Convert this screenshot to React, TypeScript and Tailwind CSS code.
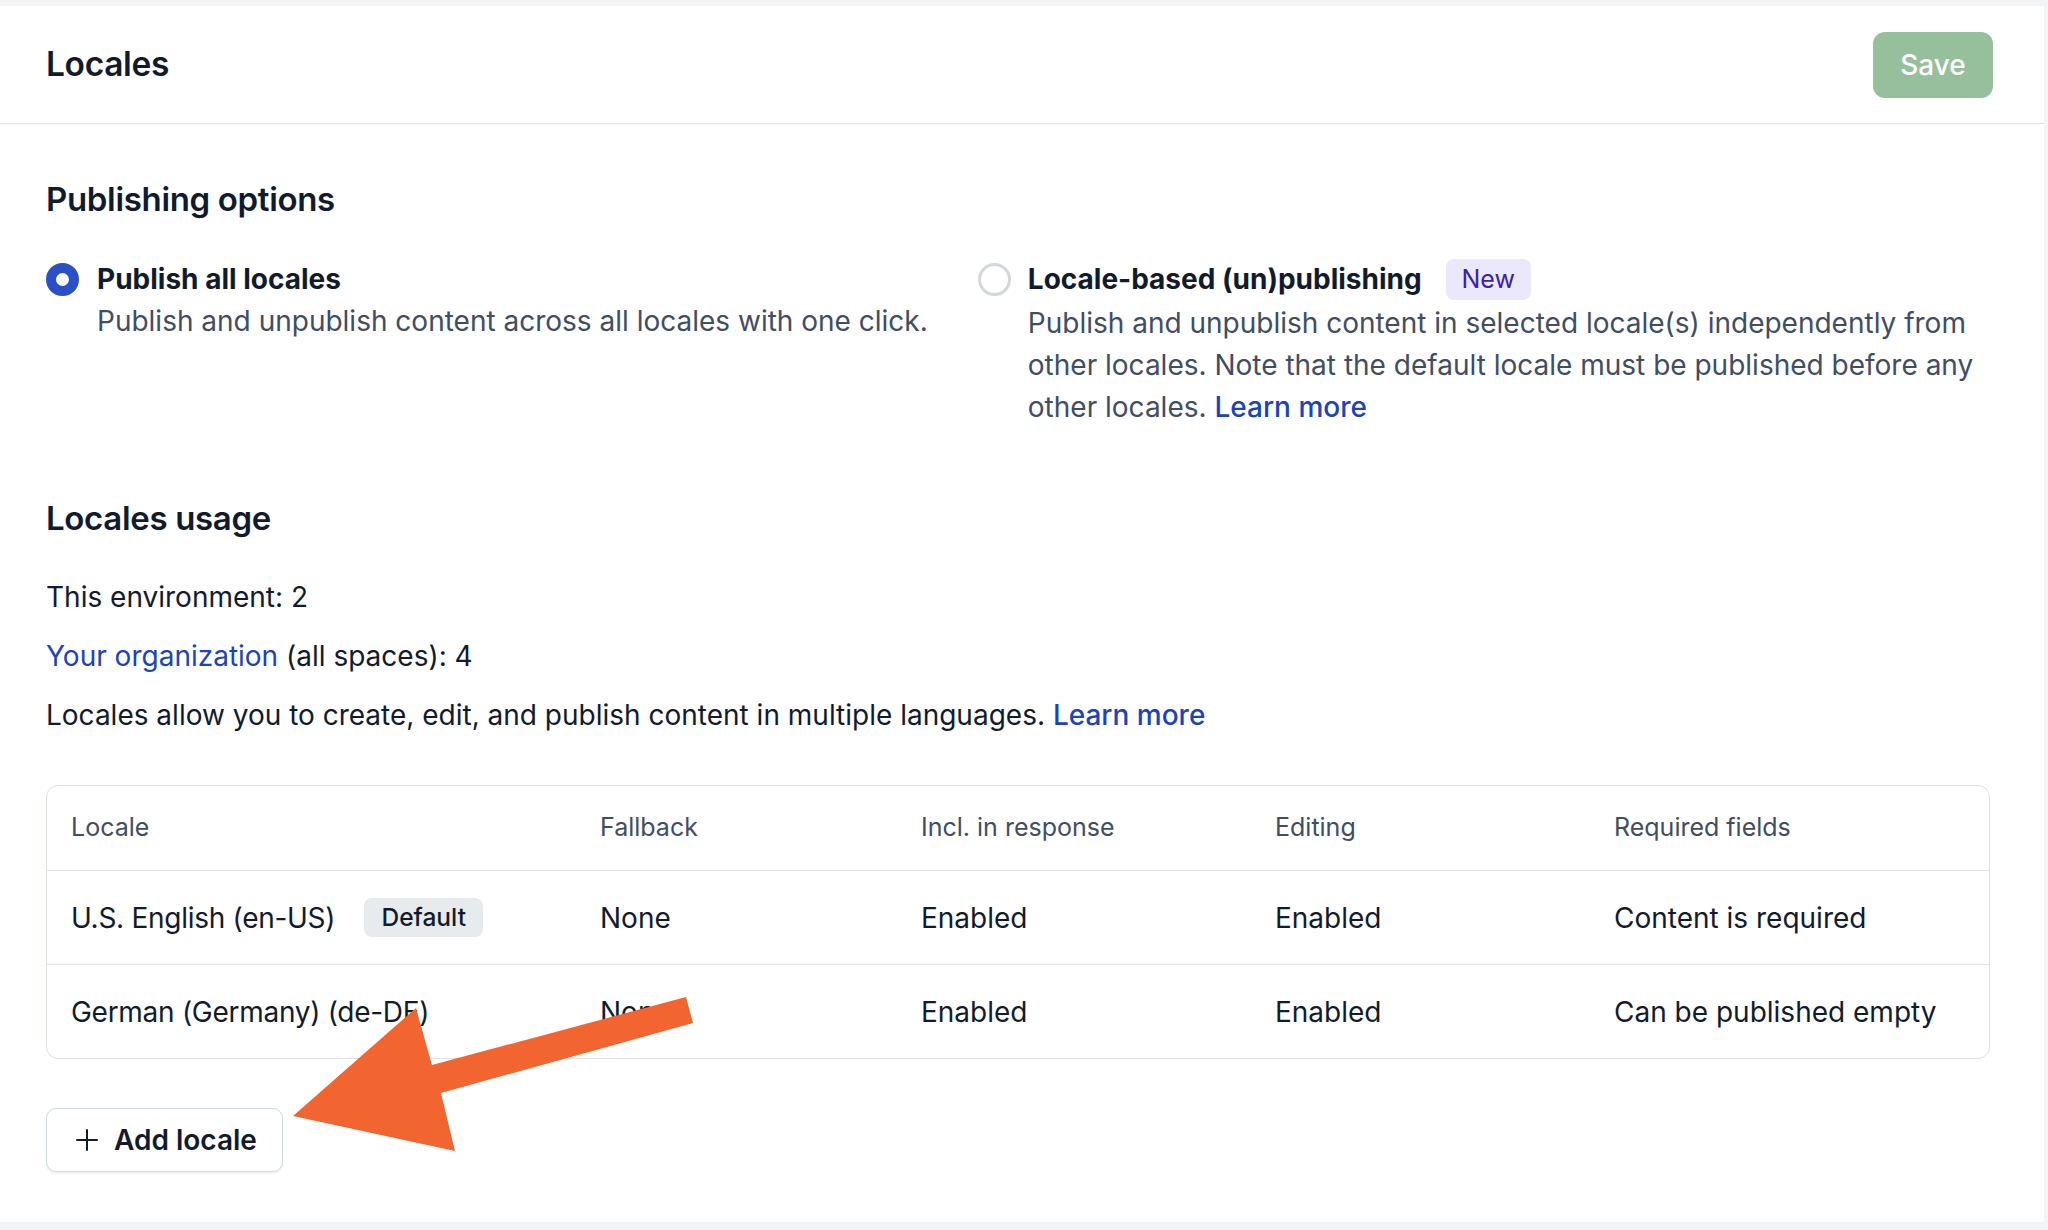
import React from "react";

const columns = ["Locale", "Fallback", "Incl. in response", "Editing", "Required fields"];

const rows = [
  { name: "U.S. English (en-US)", isDefault: true, fallback: "None", response: "Enabled", editing: "Enabled", required: "Content is required" },
  { name: "German (Germany) (de-DE)", isDefault: false, fallback: "None", response: "Enabled", editing: "Enabled", required: "Can be published empty" },
];

function Radio({ checked }: { checked: boolean }) {
  return checked ? (
    <span className="w-[33px] h-[33px] shrink-0 rounded-full border-[10px] border-[#2a51c4] bg-white" />
  ) : (
    <span className="w-[33px] h-[33px] shrink-0 rounded-full border-[3px] border-[#d3d8dc] bg-white" />
  );
}

export default function App() {
  return (
    <div
      className="relative min-h-screen bg-[#f3f4f5] pt-[6px] text-[#111b2b]"
      style={{ fontFamily: "Inter, 'Noto Sans', sans-serif" }}
    >
      <div className="mr-[4px] h-[1216px] bg-white">
        {/* header */}
        <div className="flex h-[118px] items-center justify-between border-b border-[#dde2e6] pl-[46px] pr-[51px]">
          <h1 className="text-[33.5px] font-semibold leading-none tracking-[-0.01em]">Locales</h1>
          <button className="flex h-[66px] w-[120px] items-center justify-center rounded-[12px] bg-[#96bf9b] text-[28px] font-medium text-white">
            Save
          </button>
        </div>

        <div className="pl-[46px] pr-[54px]">
          {/* publishing options */}
          <h2 className="mt-[54px] text-[33px] font-semibold leading-[42px] tracking-[-0.01em]">Publishing options</h2>
          <div className="mt-[38px] flex gap-[50px]">
            <div className="flex shrink-0 gap-[18px]">
              <div className="flex h-[42px] items-center">
                <Radio checked />
              </div>
              <div className="text-[28px] leading-[42px]">
                <div className="font-bold">Publish all locales</div>
                <div className="text-[#414d63]">Publish and unpublish content across all locales with one click.</div>
              </div>
            </div>
            <div className="flex min-w-0 flex-1 gap-[17px]">
              <div className="flex h-[42px] items-center">
                <Radio checked={false} />
              </div>
              <div className="flex min-w-0 flex-1 flex-col gap-[2px] text-[28px] leading-[42px]">
                <div className="flex h-[42px] items-center gap-[24px]">
                  <span className="font-bold">Locale-based (un)publishing</span>
                  <span className="flex h-[41px] w-[85px] items-center justify-center rounded-[8px] bg-[#ece8fc] text-[25px] text-[#3b22a8]">
                    New
                  </span>
                </div>
                <p className="text-[#414d63]">
                  Publish and unpublish content in selected locale(s) independently from other locales. Note that the
                  default locale must be published before any other locales.{" "}
                  <a className="font-medium text-[#1c44b5]">Learn more</a>
                </p>
              </div>
            </div>
          </div>

          {/* usage */}
          <h2 className="mt-[69px] text-[33px] font-semibold leading-[42px] tracking-[-0.01em]">Locales usage</h2>
          <div className="mt-[37px] flex flex-col gap-[17px] text-[28px] leading-[42px]">
            <p>This environment: 2</p>
            <p>
              <a className="text-[#1c44b5]">Your organization</a> (all spaces): 4
            </p>
            <p>
              Locales allow you to create, edit, and publish content in multiple languages.{" "}
              <a className="font-medium text-[#1c44b5]">Learn more</a>
            </p>
          </div>

          {/* table */}
          <div className="mt-[49px] overflow-hidden rounded-[12px] border border-[#dde2e6]">
            <div className="grid h-[84px] grid-cols-[529px_321px_354px_339px_1fr] items-center text-[25px] text-[#414d63]">
              {columns.map((c) => (
                <div key={c} className="pl-[24px]">
                  {c}
                </div>
              ))}
            </div>
            {rows.map((r) => (
              <div
                key={r.name}
                className="grid h-[94px] grid-cols-[529px_321px_354px_339px_1fr] items-center border-t border-[#dde2e6] text-[28px]"
              >
                <div className="flex items-center gap-[29px] pl-[24px]">
                  <span className="tracking-[-0.01em]">{r.name}</span>
                  {r.isDefault && (
                    <span className="flex h-[39px] w-[119px] items-center justify-center rounded-[8px] bg-[#e7ebee] text-[24.5px] font-medium">
                      Default
                    </span>
                  )}
                </div>
                <div className="pl-[24px]">{r.fallback}</div>
                <div className="pl-[24px]">{r.response}</div>
                <div className="pl-[24px]">{r.editing}</div>
                <div className="pl-[24px]">{r.required}</div>
              </div>
            ))}
          </div>

          <button className="mt-[49px] flex h-[64px] w-[237px] items-center gap-[15px] rounded-[10px] border border-[#cfd9e0] bg-white pl-[28px] text-[28px] font-semibold shadow-[0_2px_2px_rgba(0,0,0,0.06)]">
            <svg width="24" height="24" viewBox="0 0 24 24" fill="none" stroke="#111b2b" strokeWidth="2" strokeLinecap="round">
              <path d="M12 2v20M2 12h20" />
            </svg>
            Add locale
          </button>
        </div>
      </div>

      {/* annotation arrow */}
      <svg className="pointer-events-none absolute left-0 top-0" width="2048" height="1230" viewBox="0 0 2048 1230">
        <polygon
          points="293,1116 416,1008 432,1065 686,997 693,1023 441,1093 455,1151"
          fill="#f26430"
        />
      </svg>
    </div>
  );
}
